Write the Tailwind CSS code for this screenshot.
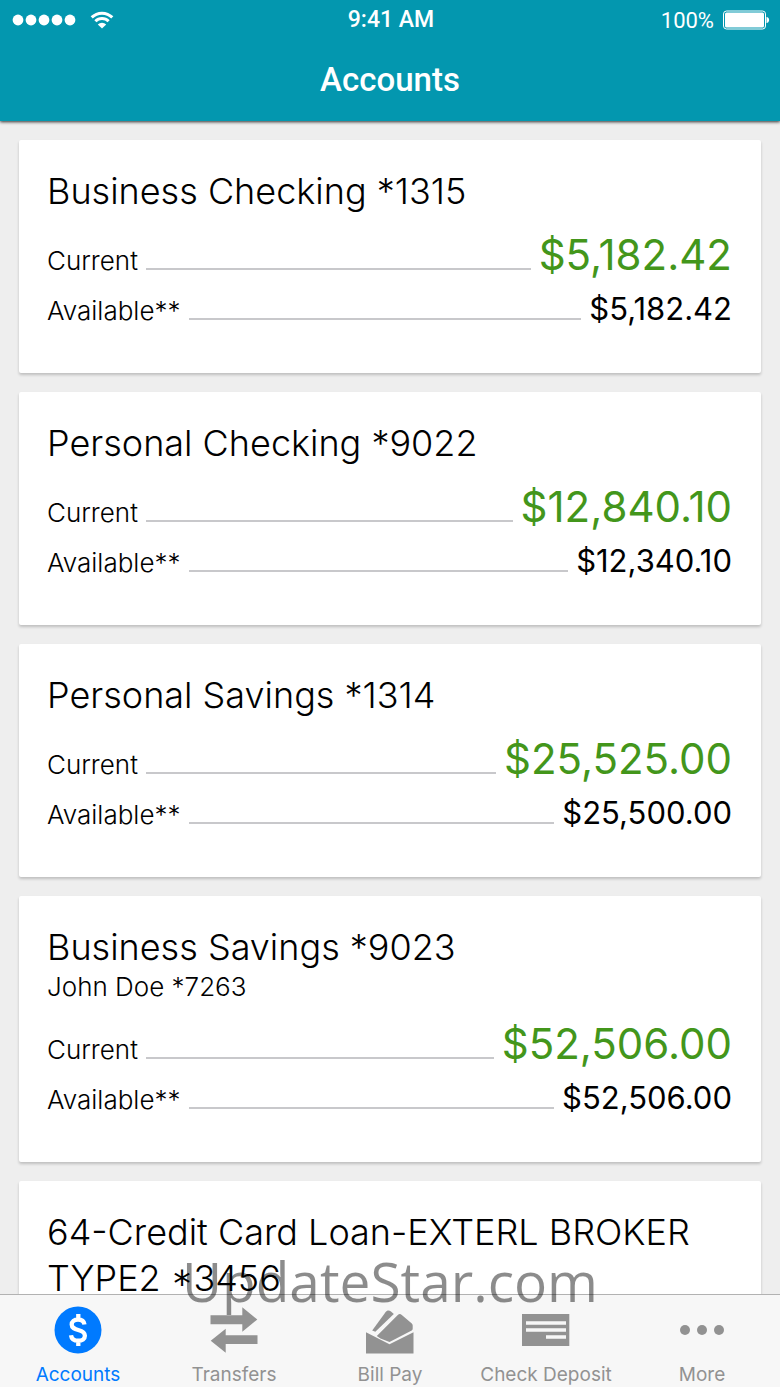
<!DOCTYPE html>
<html lang="en">
<head>
    <meta charset="UTF-8">
    <meta name="viewport" content="width=device-width, initial-scale=1.0">
    <title>Accounts</title>
    <script src="https://cdn.jsdelivr.net/npm/@tailwindcss/browser@4"></script>
</head>
<body class="h-screen flex flex-col bg-[#eeeeee] text-black font-['Inter',sans-serif]">
    <header class="relative z-10 shrink-0 h-[121px] bg-[#0397af] text-white font-['Roboto',sans-serif] shadow-[0_1px_3px_rgba(0,0,0,0.8)]">
        <!-- Status bar -->
        <div class="grid grid-cols-3 items-center h-10 pl-3 pr-[10px] text-[22px]">
            <div class="flex items-center gap-[14px]">
                <svg class="w-16 h-3" viewBox="0 0 64 12" fill="currentColor" aria-hidden="true">
                    <circle cx="6" cy="6" r="5.4"/><circle cx="19" cy="6" r="5.4"/><circle cx="32" cy="6" r="5.4"/><circle cx="45" cy="6" r="5.4"/><circle cx="58" cy="6" r="5.4"/>
                </svg>
                <svg class="w-6 h-[18px]" viewBox="0 0 24 18" fill="none" stroke="currentColor" stroke-width="3" aria-hidden="true">
                    <path d="M1.7 6.4a14.6 14.6 0 0 1 20.6 0"/>
                    <path d="M5.4 10.2a9.3 9.3 0 0 1 13.2 0"/>
                    <path d="M12 17.6l-4.2-4.2a6 6 0 0 1 8.4 0z" fill="currentColor" stroke="none"/>
                </svg>
            </div>
            <span class="text-center text-[23px] font-medium">9:41 AM</span>
            <div class="flex items-center justify-end gap-2">
                <span>100%</span>
                <svg class="w-[48px] h-5" viewBox="0 0 48 20" fill="currentColor" aria-hidden="true">
                    <rect x="1.5" y="1" width="42" height="18" rx="3" fill="none" stroke="currentColor" stroke-width="1"/>
                    <rect x="3" y="2.5" width="39" height="15" rx="1.5"/>
                    <path d="M44.5 7c3.5 0 3.5 6 0 6z"/>
                </svg>
            </div>
        </div>
        <h1 class="text-center text-[33px] leading-[80px] font-medium">Accounts</h1>
    </header>

    <main class="flex-1 min-h-0 overflow-y-auto [scrollbar-width:none] px-[19px] pt-[19px]">
        <ul class="flex flex-col gap-[19px]">
            <li class="bg-white rounded-xs shadow-[0_2px_3px_rgba(0,0,0,0.2)] pl-7 pr-[29px] pt-7 pb-[39px]">
                <h2 class="text-[36px] leading-[46px] font-light">Business Checking *1315</h2>
                <dl class="mt-4">
                    <div class="flex items-baseline gap-2">
                        <dt class="text-[26px] leading-8 font-light">Current</dt>
                        <span class="flex-1 border-b-2 border-[#c8c8cb]"></span>
                        <dd class="text-[42px] leading-[50px] text-[#43961b]">$5,182.42</dd>
                    </div>
                    <div class="flex items-baseline gap-2 mt-1">
                        <dt class="text-[26px] leading-8 font-light">Available**</dt>
                        <span class="flex-1 border-b-2 border-[#c8c8cb]"></span>
                        <dd class="text-[31px] leading-[50px]">$5,182.42</dd>
                    </div>
                </dl>
            </li>
            <li class="bg-white rounded-xs shadow-[0_2px_3px_rgba(0,0,0,0.2)] pl-7 pr-[29px] pt-7 pb-[39px]">
                <h2 class="text-[36px] leading-[46px] font-light">Personal Checking *9022</h2>
                <dl class="mt-4">
                    <div class="flex items-baseline gap-2">
                        <dt class="text-[26px] leading-8 font-light">Current</dt>
                        <span class="flex-1 border-b-2 border-[#c8c8cb]"></span>
                        <dd class="text-[42px] leading-[50px] text-[#43961b]">$12,840.10</dd>
                    </div>
                    <div class="flex items-baseline gap-2 mt-1">
                        <dt class="text-[26px] leading-8 font-light">Available**</dt>
                        <span class="flex-1 border-b-2 border-[#c8c8cb]"></span>
                        <dd class="text-[31px] leading-[50px]">$12,340.10</dd>
                    </div>
                </dl>
            </li>
            <li class="bg-white rounded-xs shadow-[0_2px_3px_rgba(0,0,0,0.2)] pl-7 pr-[29px] pt-7 pb-[39px]">
                <h2 class="text-[36px] leading-[46px] font-light">Personal Savings *1314</h2>
                <dl class="mt-4">
                    <div class="flex items-baseline gap-2">
                        <dt class="text-[26px] leading-8 font-light">Current</dt>
                        <span class="flex-1 border-b-2 border-[#c8c8cb]"></span>
                        <dd class="text-[42px] leading-[50px] text-[#43961b]">$25,525.00</dd>
                    </div>
                    <div class="flex items-baseline gap-2 mt-1">
                        <dt class="text-[26px] leading-8 font-light">Available**</dt>
                        <span class="flex-1 border-b-2 border-[#c8c8cb]"></span>
                        <dd class="text-[31px] leading-[50px]">$25,500.00</dd>
                    </div>
                </dl>
            </li>
            <li class="bg-white rounded-xs shadow-[0_2px_3px_rgba(0,0,0,0.2)] pl-7 pr-[29px] pt-7 pb-[39px]">
                <h2 class="text-[36px] leading-[46px] font-light">Business Savings *9023</h2>
                <p class="text-[26px] leading-[33px] font-light">John Doe *7263</p>
                <dl class="mt-4">
                    <div class="flex items-baseline gap-2">
                        <dt class="text-[26px] leading-8 font-light">Current</dt>
                        <span class="flex-1 border-b-2 border-[#c8c8cb]"></span>
                        <dd class="text-[42px] leading-[50px] text-[#43961b]">$52,506.00</dd>
                    </div>
                    <div class="flex items-baseline gap-2 mt-1">
                        <dt class="text-[26px] leading-8 font-light">Available**</dt>
                        <span class="flex-1 border-b-2 border-[#c8c8cb]"></span>
                        <dd class="text-[31px] leading-[50px]">$52,506.00</dd>
                    </div>
                </dl>
            </li>
            <li class="bg-white rounded-xs shadow-[0_2px_3px_rgba(0,0,0,0.2)] pl-7 pr-[29px] pt-7 pb-[39px]">
                <h2 class="text-[36px] leading-[46px] font-light">64-Credit Card Loan-EXTERL BROKER TYPE2 *3456</h2>
            </li>
        </ul>
    </main>

    <!-- Tab bar -->
    <nav class="relative z-10 shrink-0 grid grid-cols-5 border-t border-[#b2b2b2] bg-[#f7f7f7] pt-[11px] pb-[2px] text-[19px] leading-5 text-[#929292]">
        <a href="#accounts" aria-current="page" class="flex flex-col items-center gap-[11px] text-[#007aff]">
            <svg class="size-12" viewBox="0 0 48 48" aria-hidden="true">
                <circle cx="24" cy="24" r="23.5" fill="currentColor"/>
                <path d="M30.5 18.5c-.6-3.6-3.2-5-6.5-5-3.8 0-6.3 2-6.3 5 0 3.6 3 4.5 6.5 5.5 3.6 1 6.7 2.2 6.7 5.7 0 3.2-2.7 5-6.7 5-3.9 0-6.7-1.7-7.2-5.5M24.3 8v6M24.3 34v6" fill="none" stroke="#fff" stroke-width="4.3"/>
            </svg>
            Accounts
        </a>
        <a href="#transfers" class="flex flex-col items-center gap-[11px]">
            <svg class="size-12" viewBox="0 0 48 48" fill="currentColor" aria-hidden="true">
                <path d="M.5 9.3h31.8v-8l15 12.2-15 12.2v-7.400H.5z"/>
                <path d="M47.500 29.300H15.700v-6.600l-15 12 15 12V38h31.800z"/>
            </svg>
            Transfers
        </a>
        <a href="#bill-pay" class="flex flex-col items-center gap-[11px]">
            <svg class="size-12" viewBox="0 0 48 48" fill="currentColor" aria-hidden="true">
                <path d="M0 26.300l23.500 12 24-12v21.200H0z"/>
                <path d="M6.200 24.500L19.500 6.200c1.500-2 3.500-2.200 5.500-.6l2.800 2.400L9.300 25.700z"/>
                <path d="M10.800 30L31.800 9c1.300-1.300 2.600-1.300 4 0l10 8.500c.6.600.9 1.200.9 2v3.200c0 .8-.3 1.300-1 1.700L23.500 36l-9-3.500z"/>
            </svg>
            Bill Pay
        </a>
        <a href="#check-deposit" class="flex flex-col items-center gap-[11px] whitespace-nowrap">
            <svg class="size-12" viewBox="0 0 48 48" aria-hidden="true">
                <path d="M0 8h47.300v32H0z" fill="currentColor"/>
                <path d="M4 17h40M4 24h40M24 31h20" stroke="#f7f7f7" stroke-width="3.5"/>
            </svg>
            Check Deposit
        </a>
        <a href="#more" class="flex flex-col items-center gap-[11px]">
            <svg class="size-12" viewBox="0 0 48 48" fill="currentColor" aria-hidden="true">
                <circle cx="7" cy="24" r="5"/><circle cx="24" cy="24" r="5"/><circle cx="41" cy="24" r="5"/>
            </svg>
            More
        </a>
    </nav>

    <!-- Watermark -->
    <div class="fixed z-20 inset-x-0 bottom-16 text-center text-[55px] leading-[84px] text-black/45 font-['Open_Sans',sans-serif] pointer-events-none">UpdateStar.com</div>
</body>
</html>
